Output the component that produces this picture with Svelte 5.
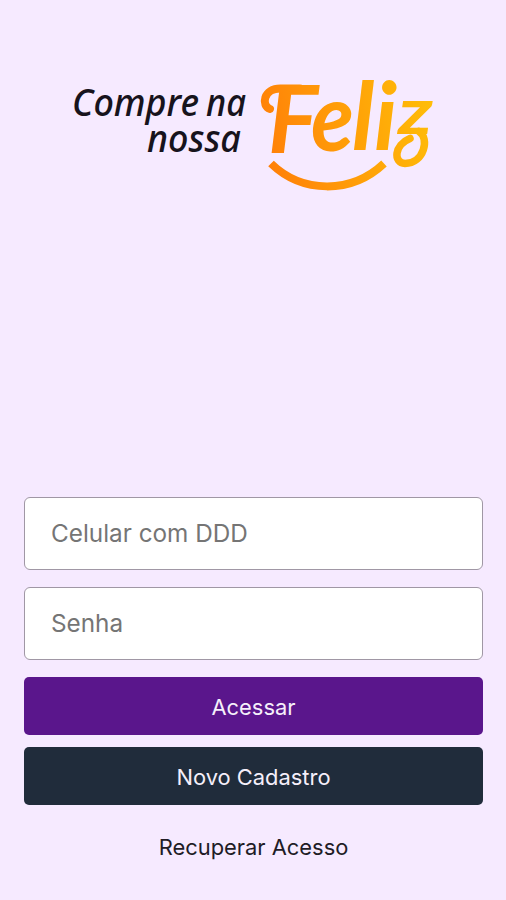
<script>
  let phone = '';
  let password = '';
</script>

<main class="screen">
  <header class="brand">
    <svg class="logo" viewBox="0 0 506 220" role="img" aria-label="Compre na nossa Feliz">
      <defs>
        <linearGradient id="sun" gradientUnits="userSpaceOnUse" x1="262" y1="150" x2="434" y2="110">
          <stop offset="0" stop-color="#ff7f08" />
          <stop offset="0.5" stop-color="#ff9f08" />
          <stop offset="1" stop-color="#ffbd08" />
        </linearGradient>
      </defs>
      <text class="tagline" x="72" y="116" textLength="127" lengthAdjust="spacingAndGlyphs">Compre</text>
      <text class="tagline" x="206" y="116" textLength="40" lengthAdjust="spacingAndGlyphs">na</text>
      <text class="tagline" x="147" y="152" textLength="94" lengthAdjust="spacingAndGlyphs">nossa</text>
      <text class="name" y="152" fill="url(#sun)"><tspan x="268" y="153" textLength="50" lengthAdjust="spacingAndGlyphs">F</tspan><tspan x="311" y="151" textLength="43" lengthAdjust="spacingAndGlyphs">e</tspan><tspan x="352" y="150">l</tspan><tspan x="374" y="150">i</tspan><tspan class="tail" x="398" y="134" textLength="35" lengthAdjust="spacingAndGlyphs">z</tspan></text>
      <!-- flourishes at both ends of the name, then the smile under it -->
      <path class="swash" d="M270 109C261 106 263 88 281 88.500H300" stroke="url(#sun)" />
      <path class="swash loop" d="M419 131.500C430 138 424 163.500 405 163.500C393 163 394 145 410 138.500" stroke="url(#sun)" />
      <path class="smile" d="M271 163.500C302 193.500 351 194.500 384 163.500" stroke="url(#sun)" />
    </svg>
  </header>

  <form class="login" on:submit|preventDefault>
    <input class="field" type="tel" placeholder="Celular com DDD" bind:value={phone} />
    <input class="field" type="password" placeholder="Senha" bind:value={password} />
    <button class="btn primary" type="submit">Acessar</button>
    <button class="btn dark" type="button">Novo Cadastro</button>
    <button class="link" type="button">Recuperar Acesso</button>
  </form>
</main>

<style>
  :global(body) {
    background: #f6eaff;
  }

  .screen {
    box-sizing: border-box;
    height: 900px;
    padding-bottom: 36px;
    display: flex;
    flex-direction: column;
    justify-content: space-between;
    background: #f6eaff;
    font-family: Inter, "Liberation Sans", sans-serif;
  }

  .logo {
    display: block;
    width: 506px;
    height: 220px;
  }

  .tagline {
    font: italic 500 38px "Noto Sans", "Open Sans", sans-serif;
    fill: #17131c;
  }

  .name {
    font: italic 700 94px Lato, sans-serif;
  }

  .tail {
    font-size: 65px;
  }

  .swash {
    fill: none;
    stroke-width: 8;
    stroke-linecap: round;
  }

  .loop {
    stroke-width: 7.5;
  }

  .smile {
    fill: none;
    stroke-width: 8;
  }

  .login {
    display: flex;
    flex-direction: column;
    padding: 0 23px 0 24px;
  }

  .field {
    box-sizing: border-box;
    width: 100%;
    height: 73px;
    margin: 0 0 17px;
    padding: 0 26px 1px;
    border: 1px solid #a097a5;
    border-radius: 6px;
    background: #fff;
    font: 400 24.3px Inter, sans-serif;
    outline: none;
  }

  .field::placeholder {
    color: #757575;
    opacity: 1;
  }

  .btn {
    height: 58px;
    margin: 0 0 12px;
    padding: 2px 0 0;
    border: none;
    border-radius: 5px;
    color: #f5effa;
    font: 400 21.9px Inter, sans-serif;
  }

  .primary {
    background: #5a168c;
  }

  .dark {
    background: #202c3b;
  }

  .link {
    height: 36px;
    margin-top: 11px;
    padding: 2px 0 0;
    border: none;
    background: none;
    color: #211c26;
    font: 400 21.9px Inter, sans-serif;
  }
</style>
